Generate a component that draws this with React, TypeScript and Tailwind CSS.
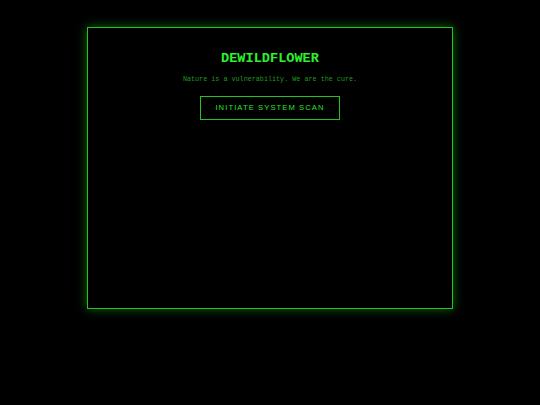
import React from "react";

export default function App() {
  return (
    <div className="min-h-[405px] w-full bg-black pt-[27px]">
      <div className="mx-auto flex h-[282px] w-[366px] flex-col items-center border border-[#22c322] bg-black pt-[23px] shadow-[0_0_10px_rgba(34,200,34,0.5)]">
        <h1 className="font-['Liberation_Mono','Courier_New',monospace] text-[13.6px] font-bold leading-[16px] text-[#2ef02e]">
          DEWILDFLOWER
        </h1>
        <p className="mt-[8px] font-['Liberation_Mono','Courier_New',monospace] text-[6.75px] leading-[8px] text-[#1f9a1f]">
          Nature is a vulnerability. We are the cure.
        </p>
        <button className="mt-[13px] h-[24px] w-[140px] border border-[#22c322] bg-black font-['Liberation_Sans',Arial,sans-serif] text-[7.6px] tracking-[1.1px] text-[#2ee02e]">
          INITIATE SYSTEM SCAN
        </button>
      </div>
    </div>
  );
}
